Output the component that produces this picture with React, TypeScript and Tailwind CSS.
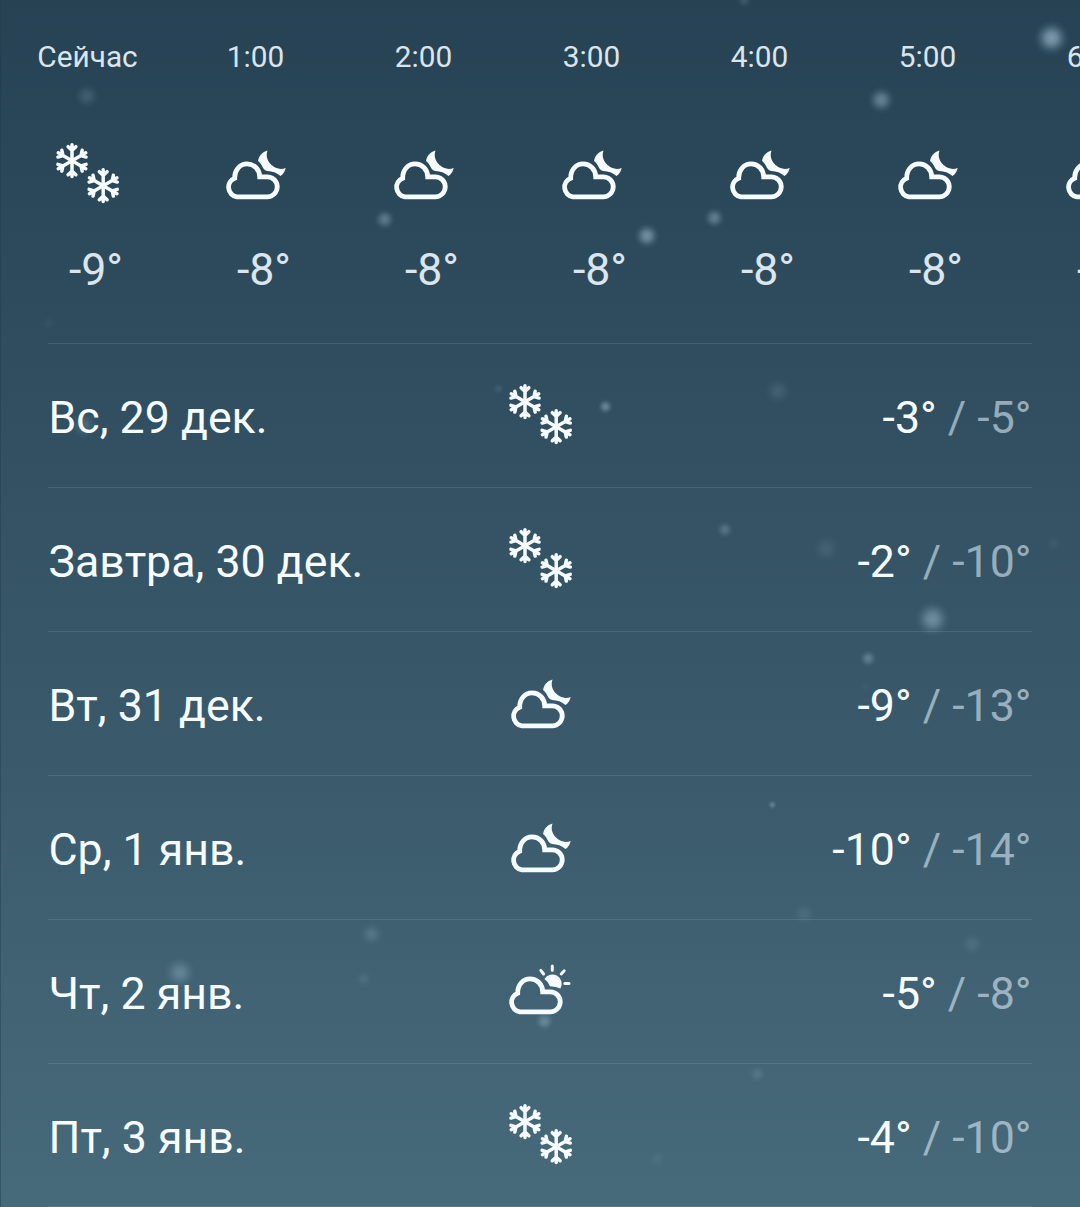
import React from 'react';

type IconName = 'snow' | 'cloudNight' | 'cloudDay';

interface HourForecast {
  time: string;
  icon: IconName;
  temp: string;
}

interface DayForecast {
  date: string;
  icon: IconName;
  high: string;
  low: string;
}

const hours: HourForecast[] = [
  { time: 'Сейчас', icon: 'snow', temp: '-9°' },
  { time: '1:00', icon: 'cloudNight', temp: '-8°' },
  { time: '2:00', icon: 'cloudNight', temp: '-8°' },
  { time: '3:00', icon: 'cloudNight', temp: '-8°' },
  { time: '4:00', icon: 'cloudNight', temp: '-8°' },
  { time: '5:00', icon: 'cloudNight', temp: '-8°' },
  { time: '6:00', icon: 'cloudNight', temp: '-8°' },
];

const days: DayForecast[] = [
  { date: 'Вс, 29 дек.', icon: 'snow', high: '-3°', low: '-5°' },
  { date: 'Завтра, 30 дек.', icon: 'snow', high: '-2°', low: '-10°' },
  { date: 'Вт, 31 дек.', icon: 'cloudNight', high: '-9°', low: '-13°' },
  { date: 'Ср, 1 янв.', icon: 'cloudNight', high: '-10°', low: '-14°' },
  { date: 'Чт, 2 янв.', icon: 'cloudDay', high: '-5°', low: '-8°' },
  { date: 'Пт, 3 янв.', icon: 'snow', high: '-4°', low: '-10°' },
];

// x, y, radius, opacity
const flakes = [
  [1051.5, 37.5, 18, 0.6],
  [881, 99.5, 14, 0.42],
  [86, 95.5, 13, 0.17],
  [384, 219, 11, 0.35],
  [646.5, 235.5, 13, 0.5],
  [714, 217.5, 11, 0.38],
  [744, 0, 8, 0.15],
  [48, 323, 8, 0.04],
  [83, 425, 14, 0.2],
  [498, 388.5, 6, 0.12],
  [605, 406.5, 8, 0.4],
  [777.5, 391, 14, 0.13],
  [724.5, 529.5, 9, 0.25],
  [826, 548.5, 14, 0.11],
  [1053.5, 543, 8, 0.06],
  [932.5, 619, 18, 0.44],
  [868, 658.5, 9, 0.32],
  [865, 686, 6, 0.04],
  [772, 805, 5, 0.3],
  [804, 914, 12, 0.1],
  [371, 934.5, 12, 0.18],
  [363, 979.5, 9, 0.1],
  [179, 973, 16, 0.3],
  [972, 944.5, 12, 0.11],
  [544, 1021.5, 10, 0.32],
  [757, 1074.5, 9, 0.15],
  [657, 1159.5, 9, 0.07],
];

const Snowflake: React.FC<{ x: number; y: number }> = ({ x, y }) => (
  <g transform={`translate(${x} ${y})`} strokeWidth="3.5" strokeLinecap="round" fill="none">
    {[0, 60, 120, 180, 240, 300].map((angle) => (
      <path key={angle} transform={`rotate(${angle})`} d="M0 0V-15.9M-3.9 -14L0 -10.4L3.9 -14" />
    ))}
  </g>
);

const CLOUD_PATH =
  'M17.4 59.6A9.7 9.7 0 0 1 15.2 41C15 33 20.4 26.7 27.5 26.7C34.6 26.7 40 32 40.2 39.7H47.8A9.95 9.95 0 0 1 47.8 59.6Z';

const WeatherIcon: React.FC<{ name: IconName }> = ({ name }) => (
  <svg className="w-[72px] h-[72px] shrink-0" viewBox="0 0 72 72" stroke="#f5fbfe" fill="#f5fbfe">
    {name === 'snow' && (
      <>
        <Snowflake x={20} y={23.7} />
        <Snowflake x={51.2} y={48.7} />
      </>
    )}
    {name === 'cloudNight' && (
      <g transform="translate(-0.5 0.2)">
        <path d={CLOUD_PATH} fill="none" strokeWidth="4.8" />
        <path
          stroke="none"
          d="M48 13.2C42.8 14.6 39 19 38.6 23.9Q40.8 25.6 42.3 28.4Q44.6 33.6 47.7 33.8Q55.5 34 61 38.9C63.8 36.8 65.6 34 66.2 30.8C61.5 32.6 55.8 31.8 51.8 27.6C47.5 23.4 46.2 18.4 48 13.2Z"
        />
      </g>
    )}
    {name === 'cloudDay' && (
      <g transform="translate(-1 0.4)">
        <path d={CLOUD_PATH} fill="none" strokeWidth="4.8" transform="translate(-1.5 -2.2)" />
        <path stroke="none" d="M40.4 24.6A8.8 8.8 0 1 1 56.4 34.2Q52.5 32 46 31.8Q44 27 40.4 24.6Z" />
        <path
          d="M48.3 11.6V15.8M36.8 16L39.6 19.6M60.2 16.4L57.2 19.6M60.8 29H65"
          fill="none"
          strokeWidth="3"
          strokeLinecap="round"
        />
      </g>
    )}
  </svg>
);

const Snowfall: React.FC = () => (
  <svg className="absolute inset-0 w-full h-full" viewBox="0 0 1080 1207">
    <defs>
      <radialGradient id="flake">
        <stop offset="0" stopColor="#bcdcec" stopOpacity="0.95" />
        <stop offset="0.3" stopColor="#bcdcec" stopOpacity="0.75" />
        <stop offset="0.6" stopColor="#bcdcec" stopOpacity="0.32" />
        <stop offset="0.8" stopColor="#bcdcec" stopOpacity="0.1" />
        <stop offset="1" stopColor="#bcdcec" stopOpacity="0" />
      </radialGradient>
    </defs>
    {flakes.map(([x, y, r, opacity]) => (
      <circle key={`${x}-${y}`} cx={x} cy={y} r={r} opacity={opacity} fill="url(#flake)" />
    ))}
  </svg>
);

const HourlyForecast: React.FC = () => (
  <div className="flex h-[343px] pl-[3px] overflow-hidden text-[#dbe5ec]">
    {hours.map((hour) => (
      <div key={hour.time} className="w-[168px] shrink-0 flex flex-col items-center pt-[38.5px]">
        <span className="pr-px text-[29.8px] leading-9">{hour.time}</span>
        <div className="mt-[62.5px]">
          <WeatherIcon name={hour.icon} />
        </div>
        <span className="mt-[34px] pl-[16px] text-[44.7px] leading-[54px]">{hour.temp}</span>
      </div>
    ))}
  </div>
);

const DayRow: React.FC<{ day: DayForecast }> = ({ day }) => (
  <div className="h-36 grid grid-cols-[1fr_72px_1fr] items-start border-t border-[#b4d7e6]/15 last:border-b text-[44.7px] leading-[54px]">
    <span className="pt-[46.5px] pl-[0.5px] text-[#f6fcff] whitespace-nowrap">{day.date}</span>
    <div className="pt-[33.5px] pl-[0.7px] -mr-px">
      <WeatherIcon name={day.icon} />
    </div>
    <span className="pt-[46.5px] pr-[0.5px] text-right whitespace-nowrap text-[#dceaf5]/60">
      <span className="text-[#f6fcff]">{day.high}</span> / {day.low}
    </span>
  </div>
);

export default function App() {
  return (
    <div className="relative w-[1080px] h-[1207px] overflow-hidden border-l border-[#1d3a4b]/40 bg-linear-to-b from-[#264253] via-[#365567] to-[#476a7b] font-[Roboto,sans-serif]">
      <Snowfall />
      <div className="relative">
        <HourlyForecast />
        <div className="pl-[47px] pr-12">
          {days.map((day) => (
            <DayRow key={day.date} day={day} />
          ))}
        </div>
      </div>
    </div>
  );
}
